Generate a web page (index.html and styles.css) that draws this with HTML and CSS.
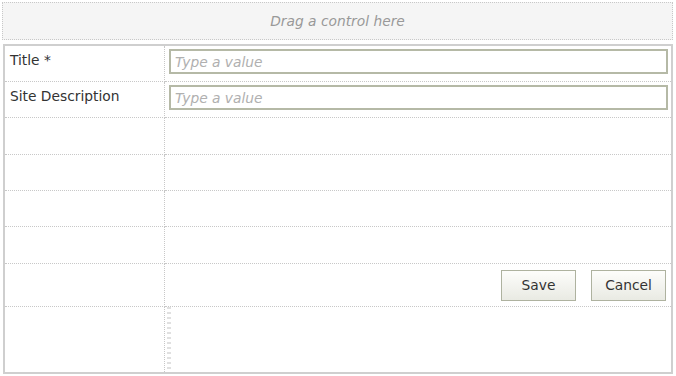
FILE: index.html
```html
<!DOCTYPE html>
<html lang="en">
<head>
    <meta charset="UTF-8">
    <title>Form Designer</title>
    <link rel="stylesheet" href="styles.css">
</head>
<body>
    <div class="drop-zone">Drag a control here</div>

    <table class="form-table">
        <tr>
            <td class="label-cell">Title *</td>
            <td class="field-cell input-cell"><input type="text" class="field" placeholder="Type a value"></td>
        </tr>
        <tr>
            <td class="label-cell">Site Description</td>
            <td class="field-cell input-cell"><input type="text" class="field" placeholder="Type a value"></td>
        </tr>
        <tr class="empty-row tall"><td class="label-cell"></td><td class="field-cell"></td></tr>
        <tr class="empty-row"><td class="label-cell"></td><td class="field-cell"></td></tr>
        <tr class="empty-row"><td class="label-cell"></td><td class="field-cell"></td></tr>
        <tr class="empty-row tall"><td class="label-cell"></td><td class="field-cell"></td></tr>
        <tr class="button-row">
            <td class="label-cell"></td>
            <td class="field-cell">
                <div class="buttons">
                    <button class="btn">Save</button>
                    <button class="btn">Cancel</button>
                </div>
            </td>
        </tr>
        <tr class="last-row">
            <td class="label-cell"></td>
            <td class="field-cell"><div class="grip"></div></td>
        </tr>
    </table>
</body>
</html>
```

FILE: styles.css
```css
body {
    font-family: "DejaVu Sans", Verdana, sans-serif;
    font-size: 13.8px;
    color: #333;
    margin: 0;
    padding: 2px 3px 0 2px;
    background-color: #fff;
}
.drop-zone {
    height: 36px;
    line-height: 37px;
    background-color: #f5f5f5;
    border: 1px dotted #c8c8c8;
    color: #999;
    font-style: italic;
    text-align: center;
}
.form-table {
    width: 670px;
    margin: 4px 0 0 1px;
    border: 2px solid #cfcfcf;
    border-collapse: collapse;
}
.form-table td {
    height: 35px;
    padding: 0;
    border-bottom: 1px dotted #c8c8c8;
    vertical-align: middle;
}
.label-cell {
    width: 154px;
    padding-left: 5px !important;
    border-right: 1px dotted #c8c8c8;
    vertical-align: top !important;
    padding-top: 6px !important;
    height: 29px !important;
}
.empty-row.tall .label-cell {
    height: 30px !important;
}
.field-cell {
    padding: 0 3px 0 4px !important;
}
.input-cell {
    vertical-align: top !important;
    padding-top: 3px !important;
    height: 32px !important;
}
.field {
    display: block;
    width: 100%;
    box-sizing: border-box;
    height: 25px;
    border: 2px solid #b5b9a6;
    padding: 0 4px;
    font-family: "DejaVu Sans", Verdana, sans-serif;
    font-size: 13.8px;
    color: #333;
}
.field::placeholder {
    color: #b0b0b0;
    font-style: italic;
}
.button-row .label-cell {
    height: 36px !important;
}
.buttons {
    display: flex;
    justify-content: flex-end;
    gap: 15px;
    padding-right: 2px;
}
.btn {
    width: 75px;
    height: 31px;
    border: 1px solid #aeb29f;
    background: linear-gradient(#fdfdfb, #e9eae3);
    font-family: "DejaVu Sans", Verdana, sans-serif;
    font-size: 13.8px;
    color: #333;
    padding: 0;
}
.last-row td {
    border-bottom: none;
}
.last-row .label-cell {
    height: 59px !important;
}
.last-row .field-cell {
    vertical-align: top;
    padding: 0 !important;
}
.grip {
    width: 4px;
    height: 62px;
    margin-left: 2px;
    background: repeating-linear-gradient(#e0e0e0 0 2px, transparent 2px 5px);
}
```
